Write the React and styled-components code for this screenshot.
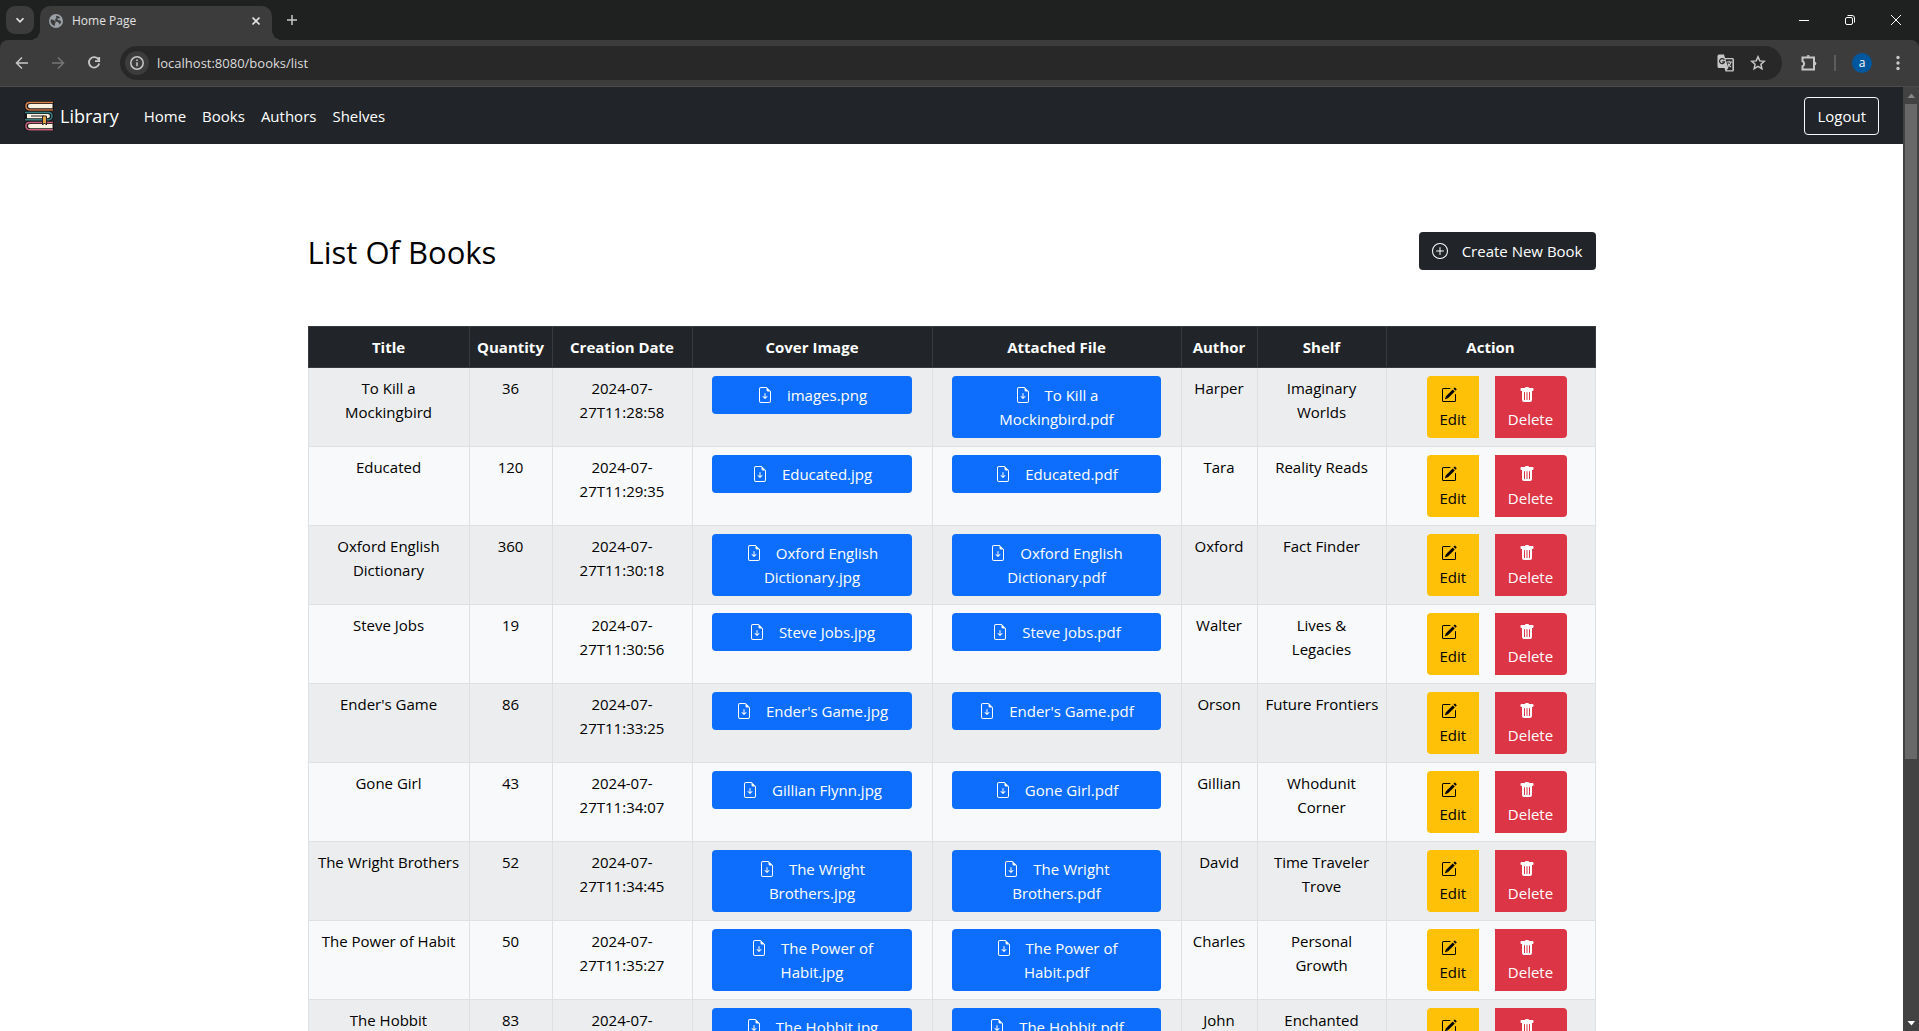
import React from "react";
import styled, { createGlobalStyle, css } from "styled-components";
import {
  BsFileEarmarkArrowDown,
  BsPencilSquare,
  BsPlusCircle,
  BsTrashFill,
} from "react-icons/bs";

const GlobalStyle = createGlobalStyle`
  *, *::before, *::after { box-sizing: border-box; }
  body {
    margin: 0;
    background: #fff;
    color: #000;
    font: 15px/24px "Open Sans", "Noto Sans", sans-serif;
  }
  button, input { font: inherit; }
  a { color: inherit; text-decoration: none; }
`;

const Window = styled.div`
  display: flex;
  flex-direction: column;
  height: 100vh;
  overflow: hidden;
`;

/* ---------- browser frame ---------- */

const TabStrip = styled.div`
  display: flex;
  align-items: flex-end;
  height: 40px;
  padding-left: 6px;
  background: #1f2020;
  color: #e3e3e3;
`;

const ChromeButton = styled.button`
  display: grid;
  place-items: center;
  flex: none;
  width: ${(p) => p.$w || 28}px;
  height: ${(p) => p.$h || 28}px;
  padding: 0;
  border: 0;
  border-radius: ${(p) => p.$radius || 0}px;
  background: ${(p) => p.$bg || "transparent"};
  color: ${(p) => p.$color || "#c7c7c7"};
`;

const TabSearch = styled(ChromeButton)`
  align-self: center;
`;

const Tab = styled.div`
  position: relative;
  display: flex;
  align-items: center;
  width: 232px;
  height: 34px;
  margin-left: 6px;
  padding: 0 8px 5px 9px;
  border-radius: 10px 10px 0 0;
  background: #3c3c3c;
  font-size: 12px;
  line-height: 16px;

  &::before, &::after {
    content: "";
    position: absolute;
    bottom: 0;
    width: 10px;
    height: 10px;
  }
  &::before {
    right: 100%;
    background: radial-gradient(circle at 0 0, transparent 10px, #3c3c3c 10px);
  }
  &::after {
    left: 100%;
    background: radial-gradient(circle at 100% 0, transparent 10px, #3c3c3c 10px);
  }
`;

const TabTitle = styled.span`
  flex: 1;
  margin-left: 9px;
`;

const NewTab = styled(ChromeButton)`
  align-self: center;
  margin-left: 6px;
`;

const WindowControls = styled.div`
  display: flex;
  align-self: stretch;
  margin-left: auto;
`;

const Toolbar = styled.div`
  display: flex;
  align-items: center;
  height: 47px;
  padding: 0 7px 1px 8px;
  border-bottom: 1px solid #4a4a4a;
  border-radius: 8px 8px 0 0;
  background: #3c3c3c;
`;

const ToolbarBack = styled.div`
  background: #1f2020;
`;

const NavButtons = styled.div`
  display: flex;
  gap: 8px;
`;

const AddressBar = styled.div`
  display: flex;
  align-items: center;
  flex: 1;
  height: 34px;
  margin: 0 13px 0 12px;
  padding: 0 8px 0 5px;
  border-radius: 17px;
  background: #282828;
`;

const AddressInput = styled.input`
  flex: 1;
  min-width: 0;
  padding: 0;
  margin-left: 8px;
  border: 0;
  outline: 0;
  background: transparent;
  color: #dcdcdc;
  font-size: 13px;
  line-height: 20px;
`;

const Divider = styled.span`
  width: 2px;
  height: 16px;
  margin: 0 11px;
  background: #5c5c5c;
`;

const Avatar = styled.button`
  width: 20px;
  height: 20px;
  margin: 0 12px 0 5px;
  padding: 0;
  border: 0;
  border-radius: 50%;
  background: #00579e;
  color: #fff;
  font-size: 12px;
  line-height: 18px;
`;

/* ---------- page ---------- */

const Viewport = styled.div`
  display: flex;
  flex: 1;
  min-height: 0;
`;

const Page = styled.div`
  flex: 1;
  min-width: 0;
  overflow: hidden;
`;

const Scrollbar = styled.div`
  display: flex;
  flex-direction: column;
  align-items: center;
  width: 16px;
  background: #424242;
`;

const ScrollArrow = styled.svg`
  flex: none;
  width: 16px;
  height: 17px;
`;

const ScrollTrack = styled.div`
  flex: 1;
  width: 12px;
`;

const ScrollThumb = styled.div`
  height: 72%;
  background: #686868;
`;

const Navbar = styled.nav`
  display: flex;
  align-items: center;
  height: 57px;
  padding: 0 24px;
  background: #212529;
  color: #fff;
`;

const Brand = styled.a`
  display: flex;
  align-items: center;
  gap: 6px;
  margin-right: 17px;
  font-size: 18px;
  line-height: 30px;
`;

const NavLink = styled.a`
  padding: 8px;
`;

const button = css`
  padding: 6px 12px;
  border: 1px solid ${(p) => p.$border || "transparent"};
  border-radius: 4px;
  color: ${(p) => p.$color || "#fff"};
  background: ${(p) => p.$bg || "transparent"};
  background-clip: border-box;
  text-align: center;
  line-height: 24px;
  svg {
    width: 16px;
    height: 16px;
    vertical-align: -2px;
    margin-right: ${(p) => p.$iconGap || 0}px;
  }
`;

const Button = styled.button`
  ${button}
`;

const LogoutButton = styled(Button)`
  margin-left: auto;
`;

const Container = styled.main`
  max-width: 1320px;
  margin: 0 auto;
  padding: 88px 16px 0;
`;

const Heading = styled.header`
  display: flex;
  align-items: flex-start;
  justify-content: space-between;
  margin-bottom: 56px;
`;

const Title = styled.h2`
  margin: 0;
  font-size: 31px;
  font-weight: 500;
  line-height: 40px;
  height: 38px;
`;

const BookTable = styled.table`
  width: 100%;
  table-layout: fixed;
  border-collapse: collapse;
  text-align: center;
`;

const Col = styled.col`
  width: ${(p) => p.$w}px;
`;

const HeadCell = styled.th`
  padding: 8px 0;
  border: 1px solid #373b3e;
  background: #212529;
  color: #fff;
  font-weight: 700;
`;

const Row = styled.tr`
  background: #f8f9fa;
  &:nth-child(odd) { background: #ecedee; }
`;

const Cell = styled.td`
  padding: 8px;
  border: 1px solid #dfe0e1;
  vertical-align: top;
`;

const FileButton = styled.a`
  ${button}
  display: block;
  width: 90%;
  margin: 0 auto;
`;

const Actions = styled.div`
  display: flex;
  justify-content: center;
  gap: 16px;
  padding-left: 12px;
`;

const EditButton = styled(Button)`
  width: 52px;
  border-radius: 4px 0 0 4px;
`;

const DeleteButton = styled(Button)`
  width: 72px;
  border-radius: 0 4px 4px 0;
`;

const columns = [
  ["Title", 161],
  ["Quantity", 83],
  ["Creation Date", 140],
  ["Cover Image", 240],
  ["Attached File", 249],
  ["Author", 76],
  ["Shelf", 129],
  ["Action", 209],
];

const books = [
  ["To Kill a Mockingbird", 36, "11:28:58", "images.png", "To Kill a Mockingbird.pdf", "Harper", "Imaginary Worlds"],
  ["Educated", 120, "11:29:35", "Educated.jpg", "Educated.pdf", "Tara", "Reality Reads"],
  ["Oxford English Dictionary", 360, "11:30:18", "Oxford English Dictionary.jpg", "Oxford English Dictionary.pdf", "Oxford", "Fact Finder"],
  ["Steve Jobs", 19, "11:30:56", "Steve Jobs.jpg", "Steve Jobs.pdf", "Walter", "Lives & Legacies"],
  ["Ender's Game", 86, "11:33:25", "Ender's Game.jpg", "Ender's Game.pdf", "Orson", "Future\u00a0Frontiers"],
  ["Gone Girl", 43, "11:34:07", "Gillian Flynn.jpg", "Gone Girl.pdf", "Gillian", "Whodunit Corner"],
  ["The Wright Brothers", 52, "11:34:45", "The Wright Brothers.jpg", "The Wright Brothers.pdf", "David", "Time Traveler Trove"],
  ["The Power of Habit", 50, "11:35:27", "The Power of Habit.jpg", "The Power of Habit.pdf", "Charles", "Personal Growth"],
  ["The Hobbit", 83, "", "The Hobbit.jpg", "The Hobbit.pdf", "John", "Enchanted"],
];

const Stroke = ({ size = 16, width = 2, children }) => (
  <svg width={size} height={size} viewBox="0 0 16 16" fill="none" stroke="currentColor" strokeWidth={width}>
    {children}
  </svg>
);

const GlobeIcon = () => (
  <svg width="14" height="14" viewBox="0 0 14 14">
    <circle cx="7" cy="7" r="7" fill="#9aa0a6" />
    <path
      d="M2 5.5c2 0 3 .6 4 1.600c1 .9 1 1.500.2 2.100c-.5.5-.3 1.400-.2 2.800C3.500 11.500 1.700 9.500 1.500 7zM7 1.800c1.800 0 3 .7 4 1.900c-.5.8-1.400.6-2.200.8c-.8.300-.6 1.300.3 1.500c1 .2 2.300.2 3 1.500c-.2 1.200-.8 2.300-1.700 3c-.5-1-.4-2-1.600-2.500c-1.200-.5-2.700-.5-2.700-2c0-1 .6-1.500 1.300-1.800z"
      fill="#3c3c3c"
    />
  </svg>
);

const TranslateIcon = () => (
  <svg width="18" height="18" viewBox="0 0 18 18">
    <path d="M2 .500h5l1 3.500h7.500a1.500 1.500 0 0 1 1.500 1.500v10.500A1.500 1.500 0 0 1 15.500 17.500H8.500L7.500 14H2A1.500 1.500 0 0 1 .5 12.500v-10.500A1.500 1.500 0 0 1 2 .500z" fill="#c7c7c7" />
    <path d="M8.500 5.200H15.400v11H9.600l1.800-2.200z" fill="#282828" />
    <path d="M7.300 6A2.500 2.500 0 1 0 7.500 7.800H5.200" fill="none" stroke="#282828" strokeWidth="1.200" />
    <path d="M9.500 8h5.500M12.300 6.800v1.200M14 8.200c-.5 2-1.700 3.300-3 4.200M11 9.500c.6 1.300 1.700 2.500 3 3.500" fill="none" stroke="#c7c7c7" strokeWidth="1.200" />
  </svg>
);

const BooksLogo = () => (
  <svg width="30" height="30" viewBox="0 0 30 30" fill="none">
    <path d="M30 0H5Q0 0 0 5t5 5h25z" fill="#15171a" />
    <path d="M29 1.500H5.500Q2 1.500 2 5t3.500 3.700H29" stroke="#d9814a" strokeWidth="1.500" />
    <path d="M5 8.700h24" stroke="#a35b35" strokeWidth="1.500" />
    <path d="M28.500 3H6Q4 3 4 5t2 2.200h22.500z" fill="#fdf3e3" />

    <path d="M0 10h25q5 0 5 5t-5 5H0z" fill="#15171a" />
    <path d="M1 11.500h23.500Q28 11.500 28 15t-3.500 3.700H1" stroke="#3a7f80" strokeWidth="1.500" />
    <path d="M3 13h20.500Q26 13 26 15t-2.500 2.200H3z" fill="#fdf3e3" />
    <path d="M7 15h13" stroke="#3b3b3b" strokeWidth="1.200" />

    <path d="M30 20H5q-5 0-5 5t5 5h25z" fill="#15171a" />
    <path d="M29 21.500H5.500Q2 21.500 2 25t3.500 3.700H29" stroke="#c9607a" strokeWidth="1.500" />
    <path d="M28.500 23H6Q4 23 4 25t2 2.200h22.500z" fill="#fdf3e3" />

    <path d="M18.500 15h4v9l-2-2-2 2z" fill="#e0a345" stroke="#2a2420" />
  </svg>
);

function BrowserFrame() {
  return (
    <>
      <TabStrip>
        <TabSearch $radius={9} $bg="#3c3c3c" $color="#e3e3e3" aria-label="Search tabs">
          <Stroke size={14}><path d="M4 6l4 4 4-4" /></Stroke>
        </TabSearch>
        <Tab>
          <GlobeIcon />
          <TabTitle>Home Page</TabTitle>
          <ChromeButton $w={16} $h={16} $color="#e3e3e3" aria-label="Close tab">
            <Stroke size={14}><path d="M4 4l8 8M12 4l-8 8" /></Stroke>
          </ChromeButton>
        </Tab>
        <NewTab aria-label="New tab">
          <Stroke width={1.5}><path d="M8 3v10M3 8h10" /></Stroke>
        </NewTab>
        <WindowControls>
          <ChromeButton $w={46} $h={40} $color="#fff" aria-label="Minimize">
            <Stroke width={1}><path d="M3 8.500h10" /></Stroke>
          </ChromeButton>
          <ChromeButton $w={46} $h={40} $color="#fff" aria-label="Restore">
            <Stroke width={1}>
              <rect x="3.500" y="5.500" width="7" height="7" rx="1.500" />
              <path d="M5.500 3.500H10A2.500 2.500 0 0 1 12.500 6v4.500" />
            </Stroke>
          </ChromeButton>
          <ChromeButton $w={46} $h={40} $color="#fff" aria-label="Close window">
            <Stroke width={1}><path d="M3 3l10 10M13 3L3 13" /></Stroke>
          </ChromeButton>
        </WindowControls>
      </TabStrip>
      <ToolbarBack>
        <Toolbar>
          <NavButtons>
            <ChromeButton aria-label="Back">
              <Stroke width={1.5}><path d="M14 8H3M8 2.500L2.500 8 8 13.500" /></Stroke>
            </ChromeButton>
            <ChromeButton $color="#757575" aria-label="Forward">
              <Stroke width={1.5}><path d="M2 8h11M8 2.500L13.500 8 8 13.500" /></Stroke>
            </ChromeButton>
            <ChromeButton aria-label="Reload">
              <Stroke width={1.8}><path d="M12.500 4.500A5.200 5.200 0 1 0 13.200 8.500M13.200 2v4.200H9" /></Stroke>
            </ChromeButton>
          </NavButtons>
          <AddressBar>
            <ChromeButton $w={24} $h={24} $radius={12} $bg="#3c3c3c" aria-label="Site information">
              <Stroke width={1.5}>
                <circle cx="8" cy="8" r="6.200" />
                <path d="M8 7.200v4M8 4.500v1.500" />
              </Stroke>
            </ChromeButton>
            <AddressInput aria-label="Address" defaultValue="localhost:8080/books/list" />
            <ChromeButton $w={32} aria-label="Translate"><TranslateIcon /></ChromeButton>
            <ChromeButton $w={32} aria-label="Bookmark">
              <Stroke width={1.5}>
                <path d="M8 1.800l1.800 4.100 4.500.4-3.400 3 1 4.400L8 11.400l-3.900 2.300 1-4.400-3.400-3 4.500-.4z" />
              </Stroke>
            </ChromeButton>
          </AddressBar>
          <ChromeButton $w={28} aria-label="Extensions">
            <svg width="18" height="18" viewBox="0 0 18 18" fill="none" stroke="#c7c7c7" strokeWidth="2">
              <path d="M2.500 3.500h11.500v12H2.500v-3.300c2.200-.5 2.200-4.500 0-5z" />
              <path d="M6.500 2.800a1.700 1.700 0 0 1 3.400 0zM14.700 7.800a1.700 1.700 0 0 1 0 3.400z" fill="#c7c7c7" stroke="none" />
            </svg>
          </ChromeButton>
          <Divider />
          <Avatar>a</Avatar>
          <ChromeButton aria-label="Menu">
            <svg width="16" height="16" viewBox="0 0 16 16" fill="#c7c7c7">
              <circle cx="8" cy="2.500" r="1.700" /><circle cx="8" cy="8" r="1.700" /><circle cx="8" cy="13.500" r="1.700" />
            </svg>
          </ChromeButton>
        </Toolbar>
      </ToolbarBack>
    </>
  );
}

function BookRow({ book }) {
  const [title, quantity, time, cover, file, author, shelf] = book;
  return (
    <Row>
      <Cell>{title}</Cell>
      <Cell>{quantity}</Cell>
      <Cell>2024-07-{time && <><wbr />27T{time}</>}</Cell>
      {[cover, file].map((name) => (
        <Cell key={name}>
          <FileButton href="#" $bg="#0d6efd" $iconGap={14}>
            <BsFileEarmarkArrowDown />{name}
          </FileButton>
        </Cell>
      ))}
      <Cell>{author}</Cell>
      <Cell>{shelf}</Cell>
      <Cell>
        <Actions>
          <EditButton $bg="#ffc107" $color="#000" $iconGap={8}><BsPencilSquare /> Edit</EditButton>
          <DeleteButton $bg="#dc3545" $iconGap={8}><BsTrashFill /> Delete</DeleteButton>
        </Actions>
      </Cell>
    </Row>
  );
}

export default function App() {
  return (
    <Window>
      <GlobalStyle />
      <BrowserFrame />
      <Viewport>
        <Page>
          <Navbar>
            <Brand href="#"><BooksLogo />Library</Brand>
            <NavLink href="#">Home</NavLink>
            <NavLink href="#">Books</NavLink>
            <NavLink href="#">Authors</NavLink>
            <NavLink href="#">Shelves</NavLink>
            <LogoutButton $border="#f8f9fa">Logout</LogoutButton>
          </Navbar>
          <Container>
            <Heading>
              <Title>List Of Books</Title>
              <Button $bg="#212529" $iconGap={14}><BsPlusCircle />Create New Book</Button>
            </Heading>
            <BookTable>
              <colgroup>
                {columns.map(([name, w]) => <Col key={name} $w={w} />)}
              </colgroup>
              <thead>
                <tr>{columns.map(([name]) => <HeadCell key={name}>{name}</HeadCell>)}</tr>
              </thead>
              <tbody>
                {books.map((book) => <BookRow key={book[0]} book={book} />)}
              </tbody>
            </BookTable>
          </Container>
        </Page>
        <Scrollbar>
          <ScrollArrow viewBox="0 0 16 17"><path d="M4.500 11L8.500 6.500 12 11z" fill="#868686" /></ScrollArrow>
          <ScrollTrack><ScrollThumb /></ScrollTrack>
          <ScrollArrow viewBox="0 0 16 17"><path d="M4.500 7L8.500 11.500 12 7z" fill="#fff" /></ScrollArrow>
        </Scrollbar>
      </Viewport>
    </Window>
  );
}
